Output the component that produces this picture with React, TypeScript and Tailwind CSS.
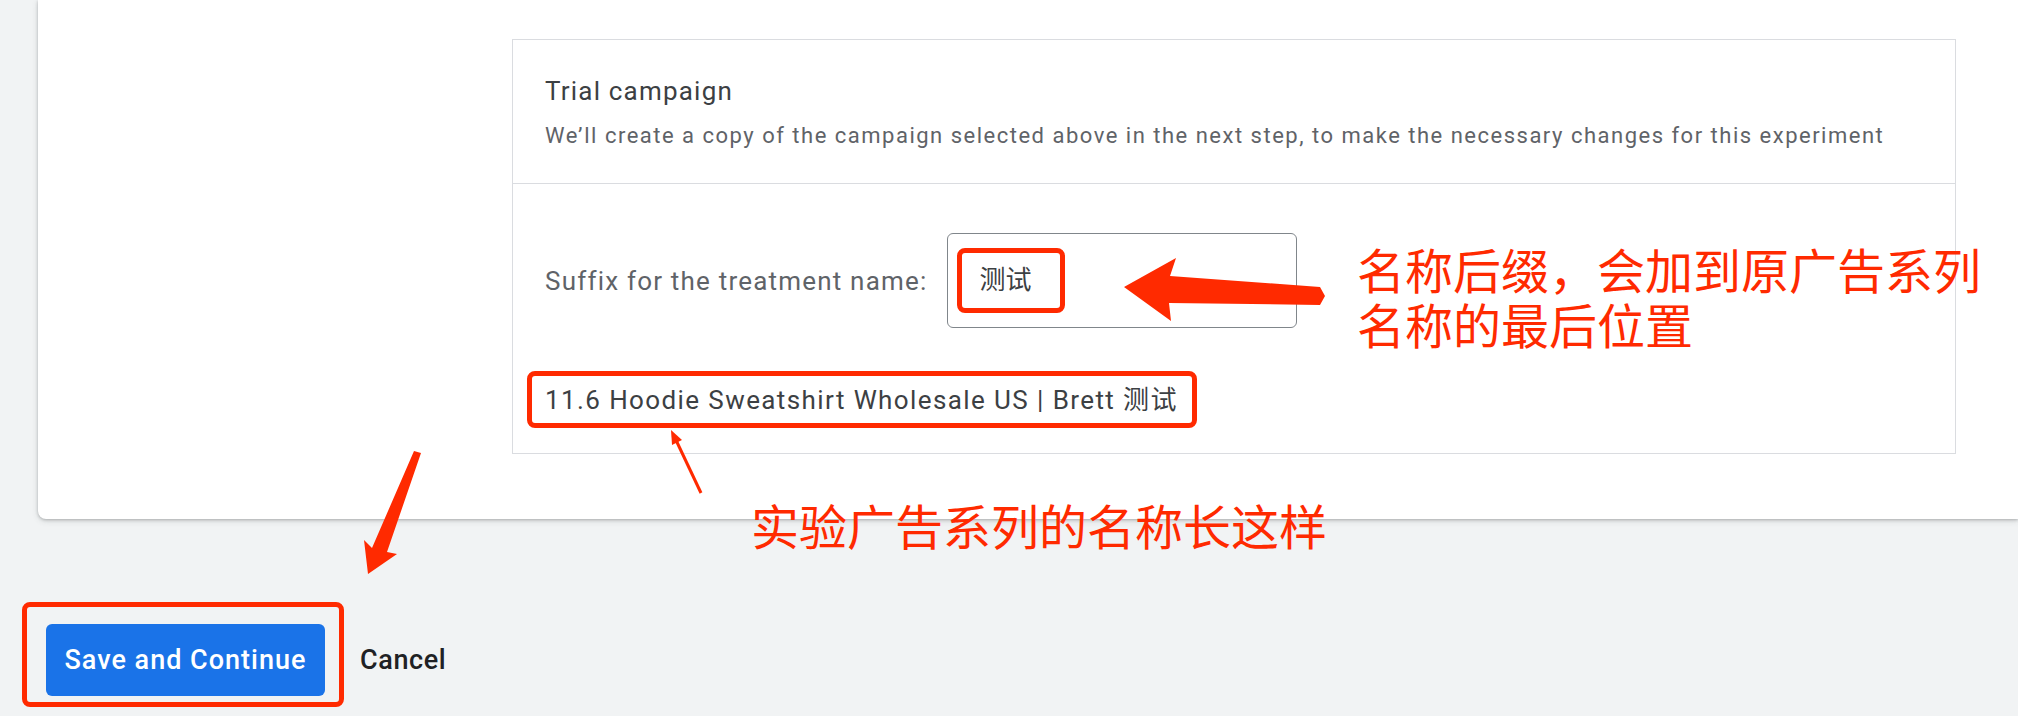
import React from "react";

const ui = "font-['Roboto','Noto_Sans_CJK_SC',sans-serif]";
const cjk = "font-['Noto_Sans_CJK_SC',sans-serif]";

function Annotations() {
  return (
    <svg
      className="pointer-events-none absolute left-0 top-0"
      width={2018}
      height={716}
      viewBox="0 0 2018 716"
    >
      {/* big arrow pointing at the suffix input */}
      <polygon
        fill="#ff2a00"
        points="1124,287 1176,258 1170,276 1320,287 1325,296 1320,305 1169,303 1171,321"
      />
      {/* thin arrow pointing at the name */}
      <line x1={701} y1={493} x2={675} y2={438} stroke="#ff2a00" strokeWidth={3} />
      <polygon fill="#ff2a00" points="671,430 682,440 672,445" />
      {/* arrow pointing at the save button */}
      <polygon
        fill="#ff2a00"
        points="414,451 421,453 387,552 397,554 368,574 364,540 372,548"
      />
    </svg>
  );
}

export default function App() {
  return (
    <div className={`relative h-[716px] w-[2018px] overflow-hidden bg-[#f1f3f4] ${ui}`}>
      <div className="ml-[38px] h-[519px] rounded-bl-lg bg-white pl-[474px] pt-[39px] shadow-[0_1px_3px_rgba(60,64,67,0.3),0_2px_6px_rgba(60,64,67,0.15)]">
        <div className="w-[1444px] border border-[#dadce0]">
          <div className="border-b border-[#dadce0] px-8 pb-[33px] pt-[35px]">
            <div className="text-[26px] leading-[32px] tracking-[1.2px] text-[#3c4043]">
              Trial campaign
            </div>
            <div className="mt-[15px] text-[22px] leading-[28px] tracking-[1.5px] text-[#5f6368]">
              We’ll create a copy of the campaign selected above in the next step, to make the
              necessary changes for this experiment
            </div>
          </div>

          <div className="px-8 pb-[25px] pt-[49px]">
            <div className="flex items-center gap-[19px]">
              <span className="text-[26px] leading-[32px] tracking-[1.2px] text-[#5f6368]">
                Suffix for the treatment name:
              </span>
              <div className="flex h-[95px] w-[350px] items-center rounded-md border border-[#80868b] pl-[9px]">
                <span className="flex h-[65px] w-[108px] items-center rounded-lg border-[5px] border-[#ff2a00] pl-[18px] text-[26px] text-[#3c4043]">
                  测试
                </span>
              </div>
            </div>

            <div className="mt-[43px]">
              <span className="-ml-[18px] inline-flex h-[57px] items-center rounded-lg border-[5px] border-[#ff2a00] pl-[13px] pr-[14px] text-[26px] leading-[32px] tracking-[1.4px] text-[#3c4043]">
                11.6 Hoodie Sweatshirt Wholesale US | Brett 测试
              </span>
            </div>
          </div>
        </div>
      </div>

      <div className="flex items-start">
        <div className="ml-[22px] mt-[83px] rounded-lg border-[5px] border-[#ff2a00] pb-[6px] pl-[19px] pr-[14px] pt-[17px]">
          <button className="flex h-[72px] w-[279px] items-center justify-center rounded-md bg-[#1a73e8] text-[27px] font-medium tracking-[1px] text-white">
            Save and Continue
          </button>
        </div>
        <span className="ml-[16px] mt-[123px] text-[27px] font-medium leading-[36px] tracking-[0.6px] text-[#202124]">
          Cancel
        </span>
      </div>

      <div
        className={`absolute left-[1357px] top-[241px] text-[48px] leading-[55px] text-[#ff2a00] ${cjk}`}
      >
        <div>名称后缀，会加到原广告系列</div>
        <div>名称的最后位置</div>
      </div>
      <div
        className={`absolute left-[751px] top-[497px] text-[48px] leading-[55px] text-[#ff2a00] ${cjk}`}
      >
        实验广告系列的名称长这样
      </div>

      <Annotations />
    </div>
  );
}
